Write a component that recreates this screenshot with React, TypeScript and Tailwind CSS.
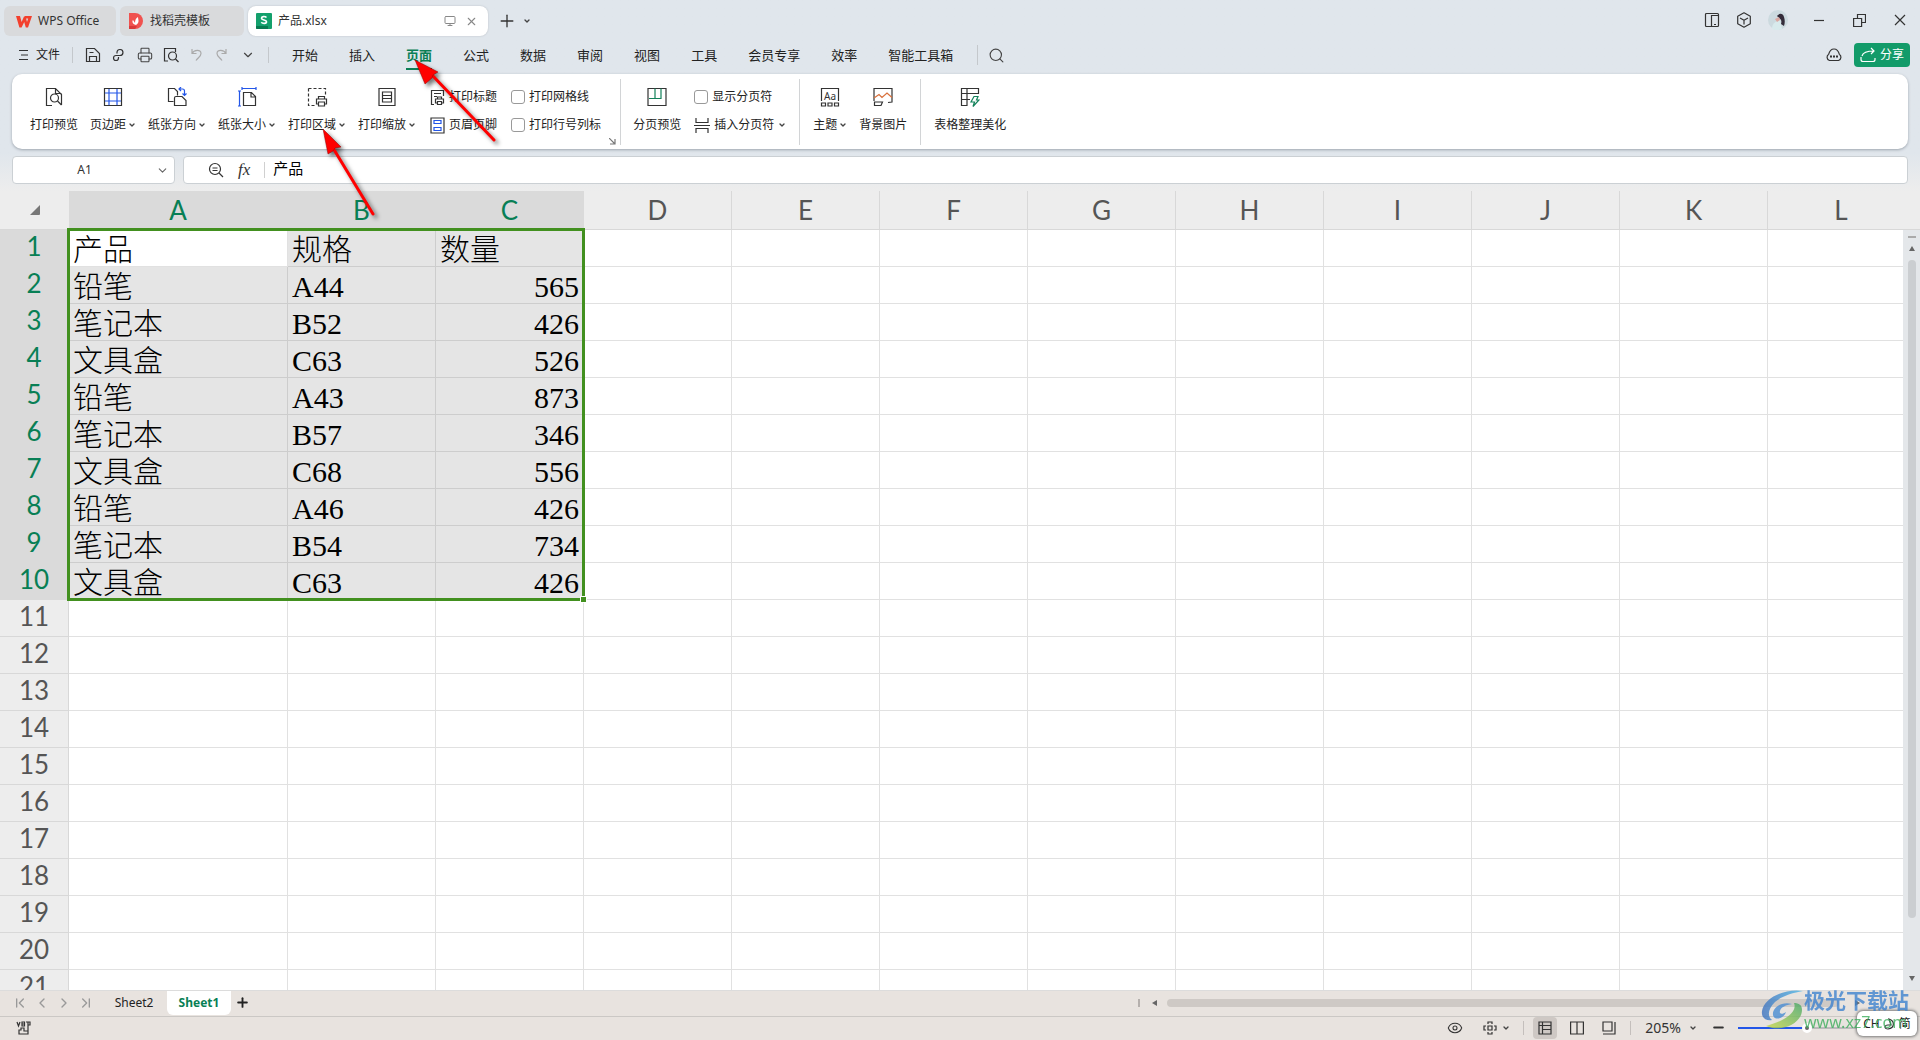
import { ReactNode } from 'react';
import clsx from 'clsx';
import {
  ChevronDown,
  ChevronLeft,
  ChevronRight,
  ChevronFirst,
  ChevronLast,
  Eye,
  Minus,
  Monitor,
  Plus,
  Printer,
  Search,
  X,
} from 'lucide-react';

type IconProps = { children: ReactNode; w?: number; h?: number; className?: string };

const Icon = ({ children, w = 20, h = 20, className }: IconProps) => (
  <svg
    width={w}
    height={h}
    viewBox={`0 0 ${w} ${h}`}
    fill="none"
    stroke="#333"
    strokeWidth="1.2"
    className={clsx('shrink-0', className)}
  >
    {children}
  </svg>
);

const Caret = () => <ChevronDown size={8} strokeWidth={4} className="shrink-0 text-[#444]" />;

const products = [
  ['产品', '规格', '数量'],
  ['铅笔', 'A44', '565'],
  ['笔记本', 'B52', '426'],
  ['文具盒', 'C63', '526'],
  ['铅笔', 'A43', '873'],
  ['笔记本', 'B57', '346'],
  ['文具盒', 'C68', '556'],
  ['铅笔', 'A46', '426'],
  ['笔记本', 'B54', '734'],
  ['文具盒', 'C63', '426'],
];

const columns = ['A', 'B', 'C', 'D', 'E', 'F', 'G', 'H', 'I', 'J', 'K', 'L'];
const rows = Array.from({ length: 21 }, (_, i) => i + 1);
const menus = ['开始', '插入', '页面', '公式', '数据', '审阅', '视图', '工具', '会员专享', '效率', '智能工具箱'];

const TitleBar = () => (
  <header className="flex h-10 items-start gap-1 px-1 pt-[6px] text-[#333]">
    <button className="flex h-[30px] w-28 items-center gap-[6px] rounded-md bg-[#d9dadc] pl-3 text-xs whitespace-nowrap">
      <svg width="16" height="13" viewBox="0 0 16 13" fill="none" className="shrink-0">
        <path d="M0 1h4l1.600 6L8 1.500h1.500L11 7l1.200-3.500H9.500L8.800 1H16l-4 11.500H9.800L8.200 7l-2.600 5.500H3.400z" fill="#f3402d" />
      </svg>
      WPS Office
    </button>
    <button className="flex h-[30px] w-[124px] items-center gap-[6px] rounded-md bg-[#d9dadc] pl-2 text-xs whitespace-nowrap">
      <svg width="16" height="16" viewBox="0 0 16 16" className="shrink-0">
        <path d="M1 0h6a8 8 0 0 1 0 16H1z" fill="#f0524f" />
        <path d="M1 13h8l-2 3H1z" fill="#d93a3a" />
        <path d="M8 12c-4-1-4-4-3-5l2 3c0-3 1-5 3-6 0 3 2 5-2 8z" fill="#fff" />
      </svg>
      找稻壳模板
    </button>
    <div className="flex h-[30px] w-60 items-center rounded-lg bg-white pr-[10px] pl-2 text-xs shadow-[0_0_2px_#b5bbc1]">
      <svg width="16" height="16" viewBox="0 0 16 16" className="mr-[6px] shrink-0">
        <rect width="16" height="16" rx="1" fill="#13a06c" />
        <path d="M0 13h12v3H1a1 1 0 0 1-1-1z" fill="#087a50" />
        <path d="M10.500 4.500C9 3 5.500 3.200 5.500 5.200c0 2.300 5 1.300 5 3.600 0 2-3.700 2.200-5.200.5" stroke="#fff" strokeWidth="1.700" fill="none" />
      </svg>
      <span className="grow">产品.xlsx</span>
      <Monitor size={12} strokeWidth={2} className="mr-[9px] text-[#888]" />
      <button aria-label="关闭标签"><X size={13} strokeWidth={2} className="text-[#888]" /></button>
    </div>
    <div className="flex h-[30px] items-center gap-[6px] pl-[5px]">
      <button aria-label="新建"><Plus size={20} strokeWidth={1.6} /></button>
      <button aria-label="标签列表"><Caret /></button>
    </div>
    <div className="ml-auto flex h-7 items-center pr-[10px]">
      <Icon w={16} h={16} className="mr-4"><rect x="1.500" y="1.500" width="13" height="13" rx="1" /><path d="M7.500 14.500V3.500h7M10 12.500h2" /></Icon>
      <Icon w={16} h={16} className="mr-4"><path d="M8 .8l6.300 3.500v7.400L8 15.200l-6.300-3.500V4.300zM4 6l4 2.200L12 6M8 8v4.500" strokeLinejoin="round" /></Icon>
      <svg width="20" height="20" viewBox="0 0 20 20" className="mr-[25px]">
        <circle cx="10" cy="10" r="10" fill="#ccdadf" />
        <path d="M4 19c0-6 4-8 8-9l2 9c-3 1.500-7 1.500-10 0z" fill="#d8eaec" />
        <path d="M9 6c2-3 6-3 7 1 1 3 1 6 0 9l-3-2c1-3 0-5-2-6z" fill="#342c3a" />
        <path d="M7 9l4-2 1 3-3 2z" fill="#d9a8a2" />
      </svg>
      <button aria-label="最小化" className="mr-7"><Icon w={12} h={12}><path d="M1 6.500h10" /></Icon></button>
      <button aria-label="还原" className="mr-7"><Icon w={13} h={13}><path d="M.6 4.500h8v8h-8zM4.500 4.500v-4h8v8h-4" /></Icon></button>
      <button aria-label="关闭"><Icon w={12} h={12}><path d="M1 1l10 10M11 1L1 11" /></Icon></button>
    </div>
  </header>
);

const MenuBar = () => (
  <nav className="flex h-[34px] items-center pr-[10px] pb-1 pl-[19px] text-[13px] text-[#222]">
    <button className="flex items-center gap-2 text-xs">
      <Icon w={9} h={12}><path d="M0 1.500h9M2 6h7M0 10.500h9" /></Icon>
      文件
    </button>
    <span className="mx-3 h-4 w-px bg-[#c4c8cc]" />
    <div className="flex items-center gap-[10px] text-[#444]">
      <button aria-label="保存"><Icon w={16} h={16}><path d="M1.500 14.500v-13h8l5 5v8zM4.500 14V9.500h7V14M4.500 5.500h4" /></Icon></button>
      <button aria-label="输出"><Icon w={16} h={16}><path d="M6 6.500V5a3 3 0 1 1 3 3.500H5a2.500 2.500 0 1 0 2.500 2.500v-1" /></Icon></button>
      <button aria-label="打印"><Printer size={16} strokeWidth={1.6} /></button>
      <button aria-label="打印预览"><Icon w={16} h={16}><path d="M5 14H1.500V1.500h11V5" /><circle cx="9.500" cy="9" r="4" /><path d="M12.500 12l3 3" /></Icon></button>
      <button aria-label="撤销"><Icon w={15} h={16} className="stroke-[#aaa]"><path d="M3 2v4.500h4.500M3 6.500C5 2.500 12 2 12 6.500c0 3-3 4-5 7" /></Icon></button>
      <button aria-label="恢复"><Icon w={15} h={16} className="stroke-[#aaa]"><path d="M12 2v4.500H7.500M12 6.500C10 2.500 3 2 3 6.500c0 3 3 4 5 7" /></Icon></button>
      <button aria-label="更多" className="ml-[2px]"><ChevronDown size={14} strokeWidth={2} /></button>
    </div>
    <span className="ml-[13px] h-4 w-px bg-[#c4c8cc]" />
    <div className="ml-[23px] flex gap-[31px]">
      {menus.map(menu => (
        <button
          key={menu}
          className={clsx(
            'mt-[3px] h-[26px] border-b-2 whitespace-nowrap',
            menu === '页面' ? 'border-[#0b7f55] font-bold text-[#0b7f55]' : 'border-transparent'
          )}
        >
          {menu}
        </button>
      ))}
    </div>
    <span className="mr-[10px] ml-6 h-5 w-px bg-[#c4c8cc]" />
    <button aria-label="搜索"><Search size={17} strokeWidth={1.6} className="text-[#444]" /></button>
    <button aria-label="云同步" className="ml-auto">
      <Icon w={18} h={16}><path d="M4.500 13.500a3.500 3.500 0 0 1-.8-6.300C4.500 4 6.500 2 9 2s4.500 2 5.300 5.200a3.500 3.500 0 0 1-.8 6.300z" /><path d="M5 9.500h2M8 9.500h2M11 9.500h2" strokeWidth="2" /></Icon>
    </button>
    <button className="ml-[11px] flex h-6 w-14 items-center justify-center gap-1 rounded bg-[#129b69] text-xs text-white">
      <Icon w={16} h={16} className="stroke-white"><path d="M1 10v2.500a2 2 0 0 0 2 2h10a2 2 0 0 0 2-2V11M2 9c1-4 5-5 12-5M11 1l3 3-3 3" /></Icon>
      分享
    </button>
  </nav>
);

const Tool = ({ label, icon, menu }: { label: string; icon: ReactNode; menu?: boolean }) => (
  <button className="flex flex-col items-center gap-2 whitespace-nowrap">
    {icon}
    <span className="flex h-5 items-center gap-[2px]">
      {label}
      {menu && <Caret />}
    </span>
  </button>
);

const Check = ({ label }: { label: string }) => (
  <label className="flex h-5 items-center gap-1 whitespace-nowrap">
    <input type="checkbox" className="size-[14px] appearance-none rounded-[3px] border border-[#999] bg-white" />
    {label}
  </label>
);

const SmallTool = ({ label, icon, menu }: { label: string; icon: ReactNode; menu?: boolean }) => (
  <button className="flex h-5 items-center gap-1 whitespace-nowrap">
    {icon}
    {label}
    {menu && <Caret />}
  </button>
);

const Divider = () => <span className="mx-[13px] h-[66px] w-px self-center bg-[#d2d4d6]" />;

const Ribbon = () => (
  <section className="mx-3 flex h-[75px] items-start rounded-[10px] bg-white pl-[18px] text-xs text-[#222] shadow-[0_1px_3px_#9ca4ad]">
    <div className="flex items-start gap-3 pt-[13px]">
      <Tool label="打印预览" icon={<Icon><path d="M8 18.500H2.500v-17h9l6 6V18M11.500 1.500v5h6" /><circle cx="10.500" cy="11" r="4" /><path d="M13.500 14l4 4" /></Icon>} />
      <Tool label="页边距" menu icon={<Icon><path d="M1.500 1.500h17v17h-17z" /><path d="M6 2v16M14 2v16M2 6h16M2 14h16" stroke="#2356e8" /></Icon>} />
      <Tool label="纸张方向" menu icon={<Icon><path d="M6.500 14.500h-5v-13h6l3 3v4M7.500 11a1.500 1.500 0 0 1 1.500-1.500h6l4 4v5H7.500z" /><path d="M12 2h3.500a2 2 0 0 1 2 2v4.500M14 0l-2 2 2 2M15.500 6.500l2 2 2-2" stroke="#2356e8" /></Icon>} />
      <Tool label="纸张大小" menu icon={<Icon><path d="M6.500 18.500v-13h8l4 4v9zM14 5.500v4.500h4.500" /><path d="M5 1.500h14M5 0v3M19 0v3M2.500 4v15M1 4h3M1 19h3" stroke="#2356e8" /></Icon>} />
      <Tool label="打印区域" menu icon={<Icon w={21}><path d="M1.500 1.500h17v7M1.500 1.500v17H8" strokeDasharray="3 2" /><path d="M11.500 12V9.500h6V12M11 17H9.500v-5h10v5H18M11.500 15h6v4h-6z" /></Icon>} />
      <Tool label="打印缩放" menu icon={<Icon><path d="M2 1.500h16v17H2z" /><path d="M5.500 5h9v10h-9zM6 8.500h8M6 11.500h8" /></Icon>} />
    </div>
    <div className="ml-[14px] flex flex-col gap-2 pt-[13px]">
      <SmallTool label="打印标题" icon={<Icon w={15} h={17}><path d="M4 15.500H1.500v-14h12V7M4 4.500h7M4 7.500h3" /><path d="M7.500 10V8h4v2M7 14H5.500v-4h8v4H12M7.500 12.500h4v3h-4z" /></Icon>} />
      <SmallTool label="页眉页脚" icon={<Icon w={15} h={17}><path d="M1 1h13v15H1z" /><path d="M4 3.500h7v3H4zM4 10.500h7v3H4z" stroke="#2356e8" /></Icon>} />
    </div>
    <div className="ml-[14px] flex flex-col gap-2 pt-[13px]">
      <Check label="打印网格线" />
      <Check label="打印行号列标" />
    </div>
    <button aria-label="页面设置" className="ml-2 self-end pb-1"><Icon w={7} h={7} className="stroke-[#777]"><path d="M0 0l5.500 5.500M6 1v5H1" /></Icon></button>
    <span className="mr-3 ml-1 h-[66px] w-px self-center bg-[#d2d4d6]" />
    <div className="pt-[13px]">
      <Tool label="分页预览" icon={<Icon><path d="M1 1.500h18v17H1z" /><path d="M2 11.500h12v-10M8 1.500v10" stroke="#13815a" /></Icon>} />
    </div>
    <div className="ml-[13px] flex flex-col gap-2 pt-[13px]">
      <Check label="显示分页符" />
      <SmallTool label="插入分页符" menu icon={<Icon w={16} h={17}><path d="M2 1v4.500h12V1M0 8.500h16M2 16v-4.500h12V16" /></Icon>} />
    </div>
    <Divider />
    <div className="flex gap-3 pt-[13px]">
      <Tool
        label="主题"
        menu
        icon={
          <Icon>
            <path d="M1.500 14V1.500h17V14M1.500 16h4v3h-4zM8 16h4v3H8zM14.500 16h4v3h-4z" />
            <text x="10" y="12.500" textAnchor="middle" fontSize="10" fill="#333" stroke="none">Aa</text>
          </Icon>
        }
      />
      <Tool label="背景图片" icon={<Icon><path d="M1 14V1.500h18V15l-4 .500M1.500 15h8l-1.500 3.500H1.500z" /><path d="M1 11l5-3.500 3 3 5-4.500 5 4.500" stroke="#d9703b" /></Icon>} />
    </div>
    <Divider />
    <div className="pt-[13px]">
      <Tool label="表格整理美化" icon={<Icon><path d="M10 12.500H1.500M1.500 1.500h17v5h-17zM1.500 6.500v12H7v-17" /><path d="M14 9.500h4l-1.500 3.500H19l-6 6.500 1.500-4.500H11z" stroke="#13815a" /></Icon>} />
    </div>
  </section>
);

const FormulaBar = () => (
  <div className="mx-3 my-[7px] flex h-7 gap-2">
    <div className="flex w-[163px] items-center rounded border border-[#cbd0d4] bg-white pr-[5px]">
      <input aria-label="名称框" defaultValue="A1" className="min-w-0 grow text-center text-xs text-[#333] outline-none" />
      <ChevronDown size={13} strokeWidth={2} className="shrink-0 text-[#666]" />
    </div>
    <div className="flex grow items-center rounded border border-[#cbd0d4] bg-white pl-6 text-[#333]">
      <Icon w={16} h={16}><circle cx="7" cy="7" r="5.500" /><path d="M11 11l4 4M4.500 6h5M4.500 8.500h5" /></Icon>
      <span className="ml-[14px] font-['Liberation_Serif',serif] text-[17px] italic">fx</span>
      <span className="ml-[14px] h-4 w-px bg-[#d0d0d0]" />
      <input aria-label="编辑栏" defaultValue="产品" className="grow pb-1 pl-2 text-[15px] text-black outline-none" />
    </div>
  </div>
);

const Sheet = () => (
  <main className="flex">
    <div className="relative h-[799px] min-w-0 grow overflow-hidden bg-white">
      {/* the last column runs on under the scroll bar */}
      <table className="w-[calc(100%+12px)] table-fixed border-separate border-spacing-0">
        <colgroup>
          <col className="w-[69px]" />
          <col className="w-[219px]" />
          {columns.slice(1, 11).map(c => <col key={c} className="w-[148px]" />)}
          <col />
        </colgroup>
        <thead>
          <tr className="h-[39px] font-['Lato',sans-serif] text-[26px] text-[#555]">
            <th className="border-b border-[#d8d8d8] bg-[#ededed] p-0 pr-7">
              <svg width="12" height="12" viewBox="0 0 12 12" className="ml-auto"><path d="M11 1v9a1 1 0 0 1-1 1H1z" fill="#777" /></svg>
            </th>
            {columns.map((c, i) => (
              <th
                key={c}
                className={clsx(
                  'border-r border-b border-[#d8d8d8] p-0 leading-[38px] font-normal',
                  i < 3 ? 'border-r-[#dadada] bg-[#dadada] text-[#087f55]' : 'bg-[#ededed]'
                )}
              >
                {c}
              </th>
            ))}
          </tr>
        </thead>
        <tbody>
          {rows.map(r => (
            <tr key={r} className="h-[37px]">
              <th
                className={clsx(
                  "border-r border-b border-[#d8d8d8] p-0 pb-1 font-['Lato',sans-serif] text-[26px] leading-8 font-normal",
                  r <= 10 ? 'border-b-[#dadada] bg-[#dadada] text-[#087f55]' : 'bg-[#ededed] text-[#555]'
                )}
              >
                {r}
              </th>
              {columns.map((c, i) => {
                const text = products[r - 1]?.[i];
                return (
                  <td
                    key={c}
                    className={clsx(
                      "border-r border-b p-0 px-1 font-['Liberation_Serif','Noto_Sans_CJK_SC',serif] text-[30px] leading-10 font-light text-black",
                      text && !(r === 1 && i === 0) ? 'border-[#cdcdcd] bg-[#e5e5e5]' : 'border-[#e1e1e1]',
                      i === 2 && r > 1 && 'text-right'
                    )}
                  >
                    <div className="h-9">{text}</div>
                  </td>
                );
              })}
            </tr>
          ))}
        </tbody>
      </table>
      {/* selection frame */}
      <div className="pointer-events-none absolute top-[37px] left-[67px] h-[373px] w-[518px] border-3 border-[#42901f]">
        <span className="absolute -right-[5px] -bottom-[5px] box-content size-[5px] border border-white bg-[#42901f]" />
      </div>
    </div>
    <div className="flex w-[17px] shrink-0 flex-col items-center bg-[#e4e7ea]">
      <span className="h-[39px] w-full shrink-0 border-b border-[#d8d8d8] bg-[#ededed]" />
      <span className="mt-[6px] h-[2px] w-2 bg-[#aaa]" />
      <svg width="6" height="5" viewBox="0 0 6 5" className="mt-2"><path d="M3 0l3 5H0z" fill="#666" /></svg>
      <span className="mt-[9px] h-[658px] w-2 rounded bg-[#cbced1]" />
      <svg width="6" height="5" viewBox="0 0 6 5" className="mt-auto mb-[9px]"><path d="M3 5l3-5H0z" fill="#666" /></svg>
    </div>
  </main>
);

const SheetTabs = () => (
  <div className="flex h-[27px] items-center border-y border-t-[#dcdcdc] border-b-[#cbc8c5] pb-[2px] pl-3 text-xs text-[#222]">
    <div className="flex gap-[6px] text-[#999]">
      <button aria-label="第一张"><ChevronFirst size={16} /></button>
      <button aria-label="上一张"><ChevronLeft size={16} /></button>
      <button aria-label="下一张"><ChevronRight size={16} /></button>
      <button aria-label="最后一张"><ChevronLast size={16} /></button>
    </div>
    <button className="mr-[11px] ml-[18px] w-11 text-center">Sheet2</button>
    <button className="h-6 w-16 rounded-b-md bg-white font-bold text-[#087f55]">Sheet1</button>
    <button aria-label="新建工作表" className="ml-1"><Plus size={15} strokeWidth={3} /></button>
    <div className="ml-auto flex w-[41%] items-center">
      <span className="h-2 w-[2px] bg-[#b5b0ad]" />
      <svg width="5" height="6" viewBox="0 0 5 6" className="mr-[10px] ml-3"><path d="M0 3l5-3v6z" fill="#666" /></svg>
      <span className="h-2 w-[86%] rounded bg-[#cec9c5]" />
      <svg width="5" height="6" viewBox="0 0 5 6" className="ml-4"><path d="M5 3L0 0v6z" fill="#666" /></svg>
    </div>
  </div>
);

const StatusBar = () => (
  <footer className="flex h-[23px] items-center pb-[2px] pl-4 text-[#333]">
    <Icon w={16} h={14}><path d="M1 1l1.500 4L4 1M6 1h2.500v4H6zM6 3h2.500M10 1h4v3h-2M12 1v12H3V9h2V7h3v3h4" /></Icon>
    <div className="ml-auto flex items-center">
      <Eye size={16} strokeWidth={1.6} />
      <Icon w={14} h={14} className="mr-[5px] ml-5"><path d="M5 5h4v4H5zM5 3V1h4v2M5 11v2h4v-2M3 5H1v4h2M11 5h2v4h-2" /></Icon>
      <Caret />
      <span className="mr-[9px] ml-[13px] h-[14px] w-px bg-[#c4bfbc]" />
      <button aria-label="普通视图" className="flex h-[22px] w-6 items-center justify-center rounded bg-[#cec8c4]">
        <Icon w={14} h={14}><path d="M1 1h12v12H1zM1 4.500h12M4.500 1v12M4.500 8.500H13" /></Icon>
      </button>
      <button aria-label="分页预览" className="ml-[13px]"><Icon w={14} h={14}><path d="M.6 1h12.800v12H.6zM7 1v12" /></Icon></button>
      <button aria-label="页面布局" className="ml-[18px]"><Icon w={14} h={14}><path d="M1 1h9v9H1zM1 13h12V1" /></Icon></button>
      <span className="mx-[14px] h-[14px] w-px bg-[#c4bfbc]" />
      <span className="mr-2 text-sm">205%</span>
      <Caret />
      <button aria-label="缩小" className="ml-[14px]"><Minus size={15} strokeWidth={3} /></button>
      <input
        type="range"
        aria-label="缩放"
        defaultValue={50}
        className="mr-[44px] ml-3 h-[2px] w-[138px] appearance-none bg-linear-to-r from-[#2356e8] from-50% to-[#bbb] to-50% [&::-webkit-slider-thumb]:size-[10px] [&::-webkit-slider-thumb]:appearance-none [&::-webkit-slider-thumb]:rounded-full [&::-webkit-slider-thumb]:border-3 [&::-webkit-slider-thumb]:border-white [&::-webkit-slider-thumb]:bg-[#666]"
      />
    </div>
  </footer>
);

// site mark and input method badge floating in the bottom right corner
const CornerMark = () => (
  <>
    <div className="absolute right-1 bottom-2 z-20 flex h-11 items-center opacity-80">
      <svg width="44" height="42" viewBox="0 0 44 42">
        <defs>
          <linearGradient id="swirl" x1="0" y1="0" x2="1" y2="0">
            <stop offset="0" stopColor="#3f73bf" />
            <stop offset="1" stopColor="#4fb9e8" />
          </linearGradient>
          <linearGradient id="leaf" x1="0" y1="1" x2="1" y2="0">
            <stop offset="0" stopColor="#c9d94a" />
            <stop offset="1" stopColor="#45a868" />
          </linearGradient>
        </defs>
        <path d="M43 2C27-1 4 8 2 22c-1 7 4 10 10 9-5-4-4-11 3-18C22 7 32 4 43 2z" fill="url(#swirl)" />
        <path d="M6 37c16 7 36-3 36-16 0-5-3-7-8-7 3 7-5 17-28 23z" fill="url(#leaf)" />
        <path d="M32 15c-11-3-20 4-19 11 1 6 11 4 13-3-4 3-7 2-6-1 1-4 6-6 12-7z" fill="#4a8dd3" />
      </svg>
      <div className="w-28 whitespace-nowrap">
        <div className="text-[21px] leading-6 font-bold text-[#3f83cf]">极光下载站</div>
        <div className="text-base leading-5 text-[#3dae5c]">www.xz7.com</div>
      </div>
    </div>
    <div className="absolute right-[3px] bottom-1 z-10 flex h-[25px] w-[60px] items-center justify-center gap-1 rounded-md bg-white text-xs text-[#222] shadow-[0_0_3px_1px_#777]">
      <span>CH</span>
      <Icon w={11} h={12}><path d="M5 1c6 2 6 9-1 10-4 0-4-4 0-4h3z" /></Icon>
      <span>简</span>
    </div>
  </>
);

// red pointers to the page tab and the print area button
const Pointers = () => (
  <>
    <svg width="90" height="90" viewBox="0 0 90 90" className="pointer-events-none absolute top-[54px] left-[410px] z-10 overflow-visible drop-shadow-[3px_3px_2px_#0008]">
      <path d="M22 21L84 86" stroke="#f00" strokeWidth="3" strokeLinecap="round" />
      <path d="M5 6l23 12-5 3-1 3-7 6z" fill="#f00" stroke="#900" strokeWidth="0.500" />
    </svg>
    <svg width="60" height="90" viewBox="0 0 60 90" className="pointer-events-none absolute top-[128px] left-[320px] z-10 overflow-visible drop-shadow-[3px_3px_2px_#0008]">
      <path d="M13 20l40 66" stroke="#f00" strokeWidth="3" strokeLinecap="round" />
      <path d="M3 1l18 18-6 1-2 3-5 3z" fill="#f00" stroke="#900" strokeWidth="0.500" />
    </svg>
  </>
);

export default function App() {
  return (
    <div className="relative min-h-screen overflow-hidden bg-[#e8e3df] font-['Noto_Sans','Noto_Sans_CJK_SC',sans-serif]">
      <div className="flex flex-col bg-linear-to-b from-[#e0e6ec] from-80% to-[#ededed]">
        <TitleBar />
        <MenuBar />
        <Ribbon />
        <FormulaBar />
      </div>
      <Sheet />
      <SheetTabs />
      <StatusBar />
      <Pointers />
      <CornerMark />
    </div>
  );
}
